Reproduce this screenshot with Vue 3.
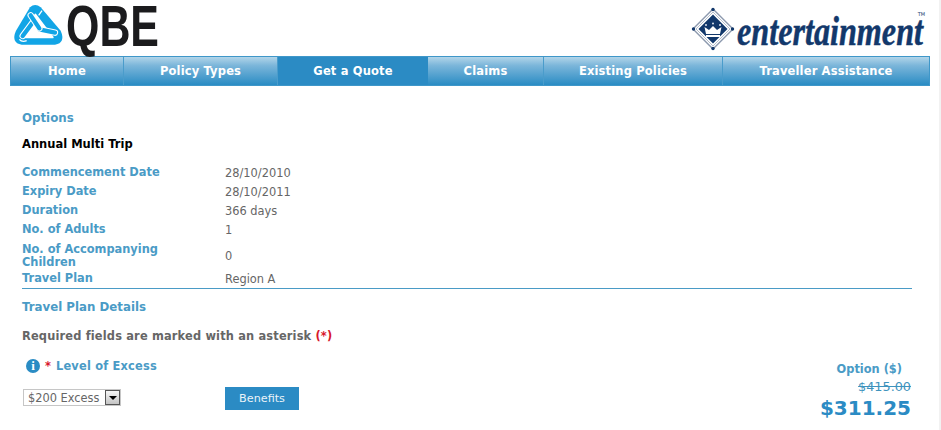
<script setup>
const tabs = [
  { label: 'Home', w: 113 },
  { label: 'Policy Types', w: 154 },
  { label: 'Get a Quote', w: 150, active: true },
  { label: 'Claims', w: 116 },
  { label: 'Existing Policies', w: 179 },
  { label: 'Traveller Assistance', w: 206 }
]
const rows = [
  ['Commencement Date', '28/10/2010'],
  ['Expiry Date', '28/10/2011'],
  ['Duration', '366 days'],
  ['No. of Adults', '1'],
  ['No. of Accompanying Children', '0'],
  ['Travel Plan', 'Region A']
]
</script>

<template>
  <div class="page">
    <header class="head">
      <div class="qbe">
        <svg class="qbe-mark" width="56" height="52" viewBox="0 0 168 156">
          <path d="M60 22 Q75 8 92 22 L152 92 Q168 128 135 134 L35 134 Q2 128 18 92 Z" fill="#12a5e6"/>
          <path d="M76 44 L128 112 L36 112 Z" fill="#fff" stroke="#fff" stroke-width="6" stroke-linejoin="round"/>
          <path d="M72 62 L38 108" stroke="#fff" stroke-width="19" stroke-linecap="round"/>
          <path d="M72 62 L38 108" stroke="#12a5e6" stroke-width="13" stroke-linecap="round"/>
          <path d="M88 88 L135 98" stroke="#fff" stroke-width="19" stroke-linecap="round"/>
          <path d="M88 88 L135 98" stroke="#12a5e6" stroke-width="13" stroke-linecap="round"/>
          <path d="M62 46 L88 85" stroke="#fff" stroke-width="19" stroke-linecap="round"/>
          <path d="M62 46 L88 85" stroke="#12a5e6" stroke-width="13" stroke-linecap="round"/>
          <path d="M28 118 Q36 128 50 122" fill="none" stroke="#fff" stroke-width="4"/>
          <path d="M96 32 L86 46" fill="none" stroke="#fff" stroke-width="4"/>
        </svg>
        <svg class="word" width="94" height="46" viewBox="0 0 94 46">
          <text class="qbe-text" x="0" y="43" textLength="93" lengthAdjust="spacingAndGlyphs">QBE</text>
        </svg>
      </div>
      <div class="ent">
        <svg class="ent-mark" width="44" height="44" viewBox="0 0 44 44">
          <path d="M22 2 L42 22 L22 42 L2 22 Z" fill="#fff" stroke="#8b98ad" stroke-width="1.400"/>
          <path d="M22 5 L39 22 L22 39 L5 22 Z" fill="none" stroke="#b4bdca" stroke-width="1"/>
          <path d="M22 7.500 L36.500 22 L22 36.500 L7.500 22 Z" fill="#12386b"/>
          <circle cx="22" cy="2.500" r="1.700" fill="#12386b"/>
          <circle cx="22" cy="41.500" r="1.700" fill="#12386b"/>
          <circle cx="2.500" cy="22" r="1.700" fill="#12386b"/>
          <circle cx="41.500" cy="22" r="1.700" fill="#12386b"/>
          <circle cx="15" cy="18" r="1" fill="#dfe5ee"/>
          <circle cx="22" cy="16.500" r="1" fill="#dfe5ee"/>
          <circle cx="29" cy="18" r="1" fill="#dfe5ee"/>
          <path d="M13.500 20 L18 23 L22 19 L26 23 L30.500 20 L29 27 L15 27 Z" fill="#fff"/>
          <rect x="15" y="28" width="14" height="2" fill="#fff"/>
        </svg>
        <svg class="word" width="188" height="46" viewBox="0 0 188 46">
          <text class="ent-text" x="0" y="37.500" textLength="186" lengthAdjust="spacingAndGlyphs">entertainment</text>
        </svg>
        <span class="tm">TM</span>
      </div>
    </header>

    <nav class="nav">
      <a
        v-for="t in tabs"
        :key="t.label"
        class="tab"
        :class="{ active: t.active }"
        :style="{ width: t.w + 'px' }"
      >{{ t.label }}</a>
    </nav>

    <main class="content">
      <h2 class="section first">Options</h2>
      <h3 class="plan">Annual Multi Trip</h3>

      <dl class="details">
        <div v-for="r in rows" :key="r[0]" class="row">
          <dt>{{ r[0] }}</dt>
          <dd>{{ r[1] }}</dd>
        </div>
      </dl>

      <h2 class="section second">Travel Plan Details</h2>
      <p class="req">Required fields are marked with an asterisk <b>(*)</b></p>

      <div class="bottom">
        <div class="excess">
          <div class="level">
            <span class="info">i</span>
            <span class="star">*</span>
            <span class="level-text">Level of Excess</span>
          </div>
          <div class="controls">
            <div class="select">
              <span>$200 Excess</span>
              <span class="arrow"><i></i></span>
            </div>
            <button class="benefits">Benefits</button>
          </div>
        </div>
        <div class="price">
          <div class="opt">Option ($)</div>
          <div class="old">$415.00</div>
          <div class="now">$311.25</div>
        </div>
      </div>
    </main>
  </div>
</template>

<style>
html, body { margin: 0; background: #fff; overflow: hidden; }
</style>

<style scoped>
.page {
  width: 941px;
  height: 430px;
  box-sizing: border-box;
  border-right: 2px solid #f2f2f2;
  font-family: "DejaVu Sans", Verdana, sans-serif;
  font-size: 11.400px;
  color: #666;
  overflow: hidden;
}
.head {
  height: 56px;
  box-sizing: border-box;
  padding: 0 14px 0 10px;
  display: flex;
  justify-content: space-between;
}
.qbe { display: flex; align-items: flex-start; }
.word { display: block; overflow: visible; }
.qbe .word { margin-top: 3px; }
.qbe-text {
  font-family: "Liberation Sans", Arial, sans-serif;
  font-weight: 700;
  font-size: 58px;
  fill: #1b1b1d;
}
.ent { display: flex; align-items: flex-start; position: relative; padding-top: 7px; }
.ent-mark { margin: 0 2px 0 0; }
.ent-text {
  font-family: "Liberation Serif", "Times New Roman", serif;
  font-style: italic;
  font-weight: 700;
  font-size: 43px;
  fill: #12386b;
  stroke: #12386b;
  stroke-width: .5px;
}
.tm {
  position: absolute;
  right: 0;
  top: 11px;
  font-size: 5px;
  line-height: 6px;
  color: #12386b;
}
.nav {
  margin-left: 10px;
  width: 920px;
  height: 30px;
  display: flex;
  box-sizing: border-box;
  border: 1px solid #3f97c9;
  background: linear-gradient(#b2d5e9, #7cb6da 30%, #2a8cc4);
}
.tab {
  flex: none;
  display: flex;
  align-items: center;
  justify-content: center;
  box-sizing: border-box;
  height: 28px;
  color: #fff;
  font-weight: 700;
  font-size: 11.500px;
  letter-spacing: .15px;
  border-right: 1px solid #4a9ccb;
}
.tab:last-child { border-right: 0; }
.tab.active { background: #2b8bc4; border-right: 0; }
.content { padding: 0 27px 0 22px; }
.section {
  margin: 0;
  color: #4a9bc6;
  font-size: 11.800px;
  font-weight: 700;
  line-height: 14px;
}
.first { padding-top: 25px; }
.plan {
  margin: 12px 0 0;
  color: #000;
  font-size: 11.500px;
  font-weight: 700;
  line-height: 14px;
}
.details {
  margin: 12px 0 0;
  border-bottom: 1px solid #4a9bc6;
}
.row { display: flex; align-items: center; min-height: 19px; }
.row dt {
  width: 203px;
  color: #4a9bc6;
  font-weight: 700;
  line-height: 13px;
}
.row dd { margin: 0; color: #666; }
.row:nth-child(5) { min-height: 30px; box-sizing: border-box; padding-top: 4px; }
.row:nth-child(5) dt { width: 160px; margin-right: 43px; }
.second { padding-top: 11px; }
.req { margin: 15px 0 0; font-weight: 700; color: #666; line-height: 14px; letter-spacing: .17px; }
.req b { color: #d8182b; }
.bottom { display: flex; justify-content: space-between; align-items: flex-start; }
.excess { padding-top: 15px; }
.level { display: flex; align-items: center; height: 16px; padding-left: 4px; }
.info {
  width: 14px;
  height: 14px;
  border-radius: 50%;
  background: #2a8cc4;
  color: #fff;
  font-family: "Liberation Serif", serif;
  font-weight: 700;
  font-size: 13px;
  line-height: 14px;
  text-align: center;
}
.star { color: #d8182b; font-weight: 700; margin-left: 5px; }
.level-text { color: #4a9bc6; font-weight: 700; margin-left: 5px; letter-spacing: .2px; }
.controls { display: flex; align-items: flex-start; margin-top: 13px; }
.select {
  width: 98px;
  height: 17px;
  margin: 2px 0 0 1px;
  box-sizing: border-box;
  border: 1px solid #c6c6c6;
  display: flex;
  justify-content: space-between;
  align-items: center;
  padding-left: 4px;
  color: #666;
}
.arrow {
  width: 15px;
  height: 15px;
  box-sizing: border-box;
  border: 1px solid #555;
  background: linear-gradient(#f6f6f6, #c4c4c4);
  display: flex;
  align-items: center;
  justify-content: center;
}
.arrow i {
  border: 4px solid transparent;
  border-top-color: #000;
  border-bottom: 0;
}
.benefits {
  margin-left: 104px;
  width: 74px;
  height: 23px;
  border: 0;
  padding: 0;
  background: #2b8bc4;
  color: #e9f3f9;
  font: 11.200px "DejaVu Sans", Verdana, sans-serif;
}
.price { text-align: right; margin-top: 19px; margin-right: 1px; }
.opt { color: #4a9bc6; font-weight: 700; line-height: 15px; padding-right: 9px; }
.old { color: #3f93bd; text-decoration: line-through; font-size: 12.800px; line-height: 14px; margin-top: 3px; }
.now { color: #2b8bc4; font-weight: 700; font-size: 20px; line-height: 22px; margin-top: 3px; }
</style>
